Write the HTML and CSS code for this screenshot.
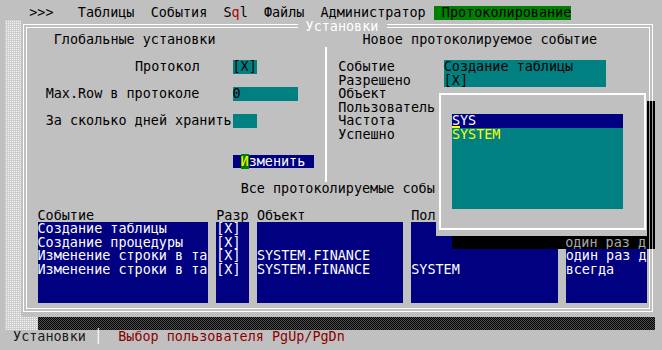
FILE: index.html
```html
<!DOCTYPE html>
<html lang="ru">
<head>
    <meta charset="utf-8">
    <title>Протоколирование - Установки</title>
    <link rel="stylesheet" href="styles.css">
</head>
<body>
    <div class="screen">
        <div class="menubar">
            <span class="menu-item menu-first">&gt;&gt;&gt;</span>
            <span class="menu-item menu-wide">Таблицы</span>
            <span class="menu-item">События</span>
            <span class="menu-item">S<span class="hotkey">q</span>l</span>
            <span class="menu-item">Файлы</span>
            <span class="menu-item">Администратор</span>
            <span class="menu-item menu-active">Протоколирование</span>
        </div>

        <div class="desktop"></div>

        <div class="window">
            <div class="window-frame"></div>
            <div class="window-title">Установки</div>
            <div class="divider"></div>

            <!-- global settings -->
            <div class="global-head">Глобальные установки</div>
            <div class="label-protocol">Протокол</div>
            <div class="field field-protocol">[X]</div>
            <div class="label-maxrow">Max.Row в протоколе</div>
            <div class="field field-maxrow">0</div>
            <div class="label-days">За сколько дней хранить</div>
            <div class="field field-days"></div>
            <div class="button-change"><span class="hot">И</span>зменить</div>

            <!-- new event -->
            <div class="event-head">Новое протоколируемое событие</div>
            <div class="event-labels">
                <div class="row">Событие</div>
                <div class="row">Разрешено</div>
                <div class="row">Объект</div>
                <div class="row">Пользователь</div>
                <div class="row">Частота</div>
                <div class="row">Успешно</div>
            </div>
            <div class="event-box">
                <div class="row">Создание таблицы</div>
                <div class="row">[X]</div>
            </div>

            <!-- all events (right part is under the popup) -->
            <div class="all-head">Все протоколируемые собы</div>

            <div class="col-head col-event">Событие</div>
            <div class="col-head col-allow">Разр</div>
            <div class="col-head col-object">Объект</div>
            <div class="col-head col-user">Пол</div>

            <div class="col-box col-event">
                <div class="row">Создание таблицы</div>
                <div class="row">Создание процедуры</div>
                <div class="row">Изменение строки в та</div>
                <div class="row">Изменение строки в та</div>
            </div>
            <div class="col-box col-allow">
                <div class="row">[X]</div>
                <div class="row">[X]</div>
                <div class="row">[X]</div>
                <div class="row">[X]</div>
            </div>
            <div class="col-box col-object">
                <div class="row"></div>
                <div class="row"></div>
                <div class="row">SYSTEM.FINANCE</div>
                <div class="row">SYSTEM.FINANCE</div>
            </div>
            <div class="col-box col-user">
                <div class="row"></div>
                <div class="row"></div>
                <div class="row"></div>
                <div class="row">SYSTEM</div>
            </div>
            <div class="col-box col-freq">
                <div class="row"></div>
                <div class="row"></div>
                <div class="row">один раз д</div>
                <div class="row">всегда</div>
            </div>
        </div>

        <div class="window-shadow"></div>

        <!-- user picker popup -->
        <div class="dialog">
            <div class="dialog-frame"></div>
            <div class="listbox">
                <div class="list-row selected"><span class="cursor">S</span>YS</div>
                <div class="list-row">SYSTEM</div>
            </div>
        </div>
        <div class="shadow-right"><div class="shadow-line"></div></div>
        <div class="shadow-bottom">один раз д</div>

        <div class="statusbar">
            <span class="status-title">Установки</span>
            <span class="status-sep">│</span>
            <span class="status-hint">Выбор пользователя PgUp/PgDn</span>
        </div>
    </div>
</body>
</html>
```

FILE: styles.css
```css
body {
    margin: 0;
    background-color: #c0c0c0;
    font-family: "DejaVu Sans Mono", monospace;
    font-size: 13.45px;
    line-height: 13.5px;
    color: #000;
}
.screen {
    display: grid;
    grid-template-columns: repeat(80, 8.13px);
    grid-template-rows: repeat(25, 13.5px);
    margin: 6px 0 0 5px;
    white-space: nowrap;
}
.row {
    height: 13.5px;
}

/* menu */
.menubar {
    grid-column: 1 / -1;
    grid-row: 1;
    display: flex;
}
.menu-item {
    margin-left: 2ch;
}
.menu-first, .menu-wide {
    margin-left: 3ch;
}
.menu-active {
    margin-left: 1ch;
    padding-left: 1ch;
    background-color: #008000;
}
.hotkey {
    color: #b00000;
}

/* background */
.desktop {
    grid-column: 1 / -1;
    grid-row: 2 / span 23;
    background-color: #f7f7f7;
    background-image: linear-gradient(90deg, #cdcdcd 1px, transparent 1px), linear-gradient(#cdcdcd 1px, transparent 1px);
    background-size: 2px 2px;
}

/* main window */
.window {
    grid-column: 3 / span 78;
    grid-row: 2 / span 22;
    display: grid;
    grid-template-columns: repeat(78, 8.13px);
    grid-template-rows: repeat(22, 13.5px);
    background-color: #c0c0c0;
}
.window-frame {
    grid-column: 1 / -1;
    grid-row: 1 / -1;
    margin: 4.75px 2px;
    border: 4px double #fff;
}
.window-title {
    grid-column: 35 / span 11;
    grid-row: 1;
    padding-left: 1ch;
    background-color: #c0c0c0;
    color: #fff;
}
.window-shadow {
    grid-column: 5 / span 76;
    grid-row: 24;
    background-image: repeating-conic-gradient(#000 0 25%, #4e4e4e 0 50%);
    background-size: 2px 2px;
}
.divider {
    grid-column: 38;
    grid-row: 3 / span 10;
    justify-self: center;
    width: 2px;
    background-color: #fff;
}

.global-head {
    grid-column: 5 / span 20;
    grid-row: 2;
}
.label-protocol {
    grid-column: 15 / span 8;
    grid-row: 4;
}
.label-maxrow {
    grid-column: 4 / span 19;
    grid-row: 6;
}
.label-days {
    grid-column: 4 / span 23;
    grid-row: 8;
}
.field {
    background-color: #008080;
}
.field-protocol {
    grid-column: 27 / span 3;
    grid-row: 4;
}
.field-maxrow {
    grid-column: 27 / span 8;
    grid-row: 6;
}
.field-days {
    grid-column: 27 / span 3;
    grid-row: 8;
}
.button-change {
    grid-column: 27 / span 10;
    grid-row: 11;
    padding-left: 1ch;
    background-color: #000080;
    color: #fff;
}
.button-change .hot {
    background-color: #008000;
    color: #ffff00;
}

.event-head {
    grid-column: 43 / span 29;
    grid-row: 2;
}
.event-labels {
    grid-column: 40 / span 12;
    grid-row: 4 / span 6;
}
.event-box {
    grid-column: 53 / span 20;
    grid-row: 4 / span 2;
    background-color: #008080;
}

.all-head {
    grid-column: 28 / span 24;
    grid-row: 13;
}

/* table of events */
.col-head {
    grid-row: 15;
}
.col-box {
    grid-row: 16 / span 6;
    overflow: hidden;
    background-color: #000080;
    color: #fff;
}
.col-event {
    grid-column: 3 / span 21;
}
.col-allow {
    grid-column: 25 / span 4;
}
.col-object {
    grid-column: 30 / span 18;
}
.col-user {
    grid-column: 49 / span 18;
}
.col-freq {
    grid-column: 68 / span 10;
}

/* popup */
.dialog {
    grid-column: 54 / span 26;
    grid-row: 7 / span 11;
    display: grid;
    grid-template-columns: repeat(26, 8.13px);
    grid-template-rows: repeat(11, 13.5px);
    background-color: #c0c0c0;
}
.dialog-frame {
    grid-column: 1 / -1;
    grid-row: 1 / -1;
    margin: 5.75px 1px 5.75px 3px;
    border: 2px solid #fff;
}
.listbox {
    grid-column: 3 / span 21;
    grid-row: 3 / span 7;
    background-color: #008080;
    color: #ffff00;
}
.list-row {
    height: 13.5px;
}
.list-row.selected {
    background-color: #000080;
    color: #fff;
}
.cursor {
    display: inline-block;
    box-shadow: inset 0 -2px #ffff00;
}
.shadow-right {
    grid-column: 80;
    grid-row: 8 / span 11;
    display: flex;
    justify-content: flex-end;
    padding-right: 2px;
    background-color: #000;
}
.shadow-line {
    width: 4px;
    box-sizing: border-box;
    border-left: 1px solid #9a9a9a;
    border-right: 1px solid #9a9a9a;
}
.shadow-bottom {
    grid-column: 56 / span 24;
    grid-row: 18;
    padding-left: 14ch;
    overflow: hidden;
    background-color: #000;
    color: #a8a8a8;
}

/* status line */
.statusbar {
    grid-column: 1 / -1;
    grid-row: 25;
    display: flex;
}
.status-title {
    margin-left: 1ch;
    color: #1a1a1a;
}
.status-sep {
    margin-left: 1ch;
    color: #fff;
}
.status-hint {
    margin-left: 2ch;
    color: #8b0000;
}
```
